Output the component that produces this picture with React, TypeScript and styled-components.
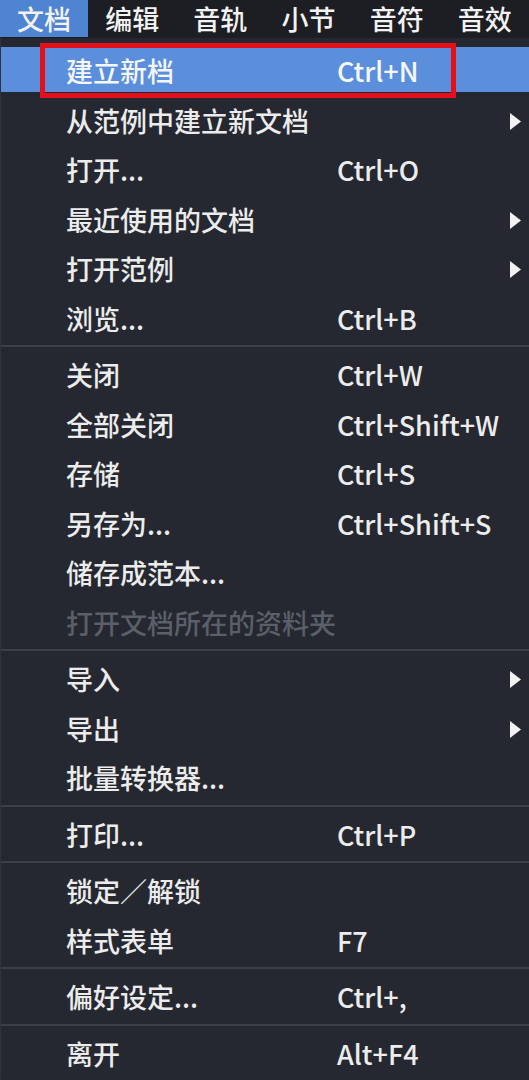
import React from "react";
import styled, { createGlobalStyle } from "styled-components";

const Global = createGlobalStyle`
  html, body { margin: 0; padding: 0; background: #252830; }
  body { font-family: "Noto Sans CJK SC", "Noto Sans", sans-serif; }
  * { box-sizing: border-box; }
`;

const Page = styled.div`
  width: 529px;
  height: 1080px;
  overflow: hidden;
  background: #252830;
  display: flex;
  flex-direction: column;
`;

const MenuBar = styled.div`
  height: 38px;
  display: flex;
  background: #1d1e23;
`;

const BarItem = styled.div<{ $active?: boolean }>`
  height: 37px;
  width: 90px;
  padding-left: 17px;
  display: flex;
  align-items: center;
  font-size: 27px;
  font-weight: 500;
  line-height: 1;
  color: #f2f2f2;
  background: ${(p) => (p.$active ? "#4f84d2" : "transparent")};
`;

const Menu = styled.div`
  padding-top: 9px;
  display: flex;
  flex-direction: column;
  border-left: 1px solid #30333b;
`;

const Row = styled.div<{ $highlight?: boolean; $disabled?: boolean }>`
  position: relative;
  height: 49.5px;
  display: grid;
  grid-template-columns: 271px 1fr 11px;
  align-items: center;
  padding: 0 8px 0 65px;
  font-size: 27px;
  font-weight: 500;
  line-height: 1;
  color: ${(p) => (p.$disabled ? "#5a5f69" : p.$highlight ? "#f4f7fc" : "#ececec")};
  background: ${(p) =>
    p.$highlight ? "linear-gradient(#5b8edb, #5b8edb) 0 0 / 100% 45px no-repeat" : "transparent"};
`;

const Label = styled.span`
  white-space: nowrap;
  padding-bottom: 2px;
`;

const Shortcut = styled.span`
  white-space: nowrap;
  font-size: 27px;
  letter-spacing: 0px;
  padding-bottom: 2px;
`;

const Arrow = styled.svg`
  width: 11px;
  height: 17px;
  display: block;
`;

const Separator = styled.div`
  height: 7px;
  padding-top: 1px;
  &::after {
    content: "";
    display: block;
    height: 2px;
    background: #3b3f48;
  }
`;

const RedBox = styled.div`
  position: absolute;
  left: 39px;
  top: -4px;
  width: 416px;
  height: 55px;
  border: 5px solid #e3101b;
  pointer-events: none;
`;

type Item = { label: string; shortcut?: string; sub?: boolean; disabled?: boolean; highlight?: boolean };

const sections: Item[][] = [
  [
    { label: "建立新档", shortcut: "Ctrl+N", highlight: true },
    { label: "从范例中建立新文档", sub: true },
    { label: "打开...", shortcut: "Ctrl+O" },
    { label: "最近使用的文档", sub: true },
    { label: "打开范例", sub: true },
    { label: "浏览...", shortcut: "Ctrl+B" },
  ],
  [
    { label: "关闭", shortcut: "Ctrl+W" },
    { label: "全部关闭", shortcut: "Ctrl+Shift+W" },
    { label: "存储", shortcut: "Ctrl+S" },
    { label: "另存为...", shortcut: "Ctrl+Shift+S" },
    { label: "储存成范本..." },
    { label: "打开文档所在的资料夹", disabled: true },
  ],
  [
    { label: "导入", sub: true },
    { label: "导出", sub: true },
    { label: "批量转换器..." },
  ],
  [{ label: "打印...", shortcut: "Ctrl+P" }],
  [
    { label: "锁定／解锁" },
    { label: "样式表单", shortcut: "F7" },
  ],
  [{ label: "偏好设定...", shortcut: "Ctrl+," }],
  [{ label: "离开", shortcut: "Alt+F4" }],
];

const barItems = ["文档", "编辑", "音轨", "小节", "音符", "音效"];

export default function App() {
  return (
    <Page>
      <Global />
      <MenuBar>
        {barItems.map((b, i) => (
          <BarItem key={b} $active={i === 0}>
            {b}
          </BarItem>
        ))}
      </MenuBar>
      <Menu>
        {sections.map((sec, si) => (
          <React.Fragment key={si}>
            {si > 0 && <Separator />}
            {sec.map((it) => (
              <Row key={it.label} $highlight={it.highlight} $disabled={it.disabled}>
                <Label>{it.label}</Label>
                <Shortcut>{it.shortcut ?? ""}</Shortcut>
                {it.sub ? (
                  <Arrow viewBox="0 0 11 17">
                    <path d="M0 0 L11 8.5 L0 17 Z" fill="#f2f2f2" />
                  </Arrow>
                ) : (
                  <span />
                )}
                {it.highlight && <RedBox />}
              </Row>
            ))}
          </React.Fragment>
        ))}
      </Menu>
    </Page>
  );
}
